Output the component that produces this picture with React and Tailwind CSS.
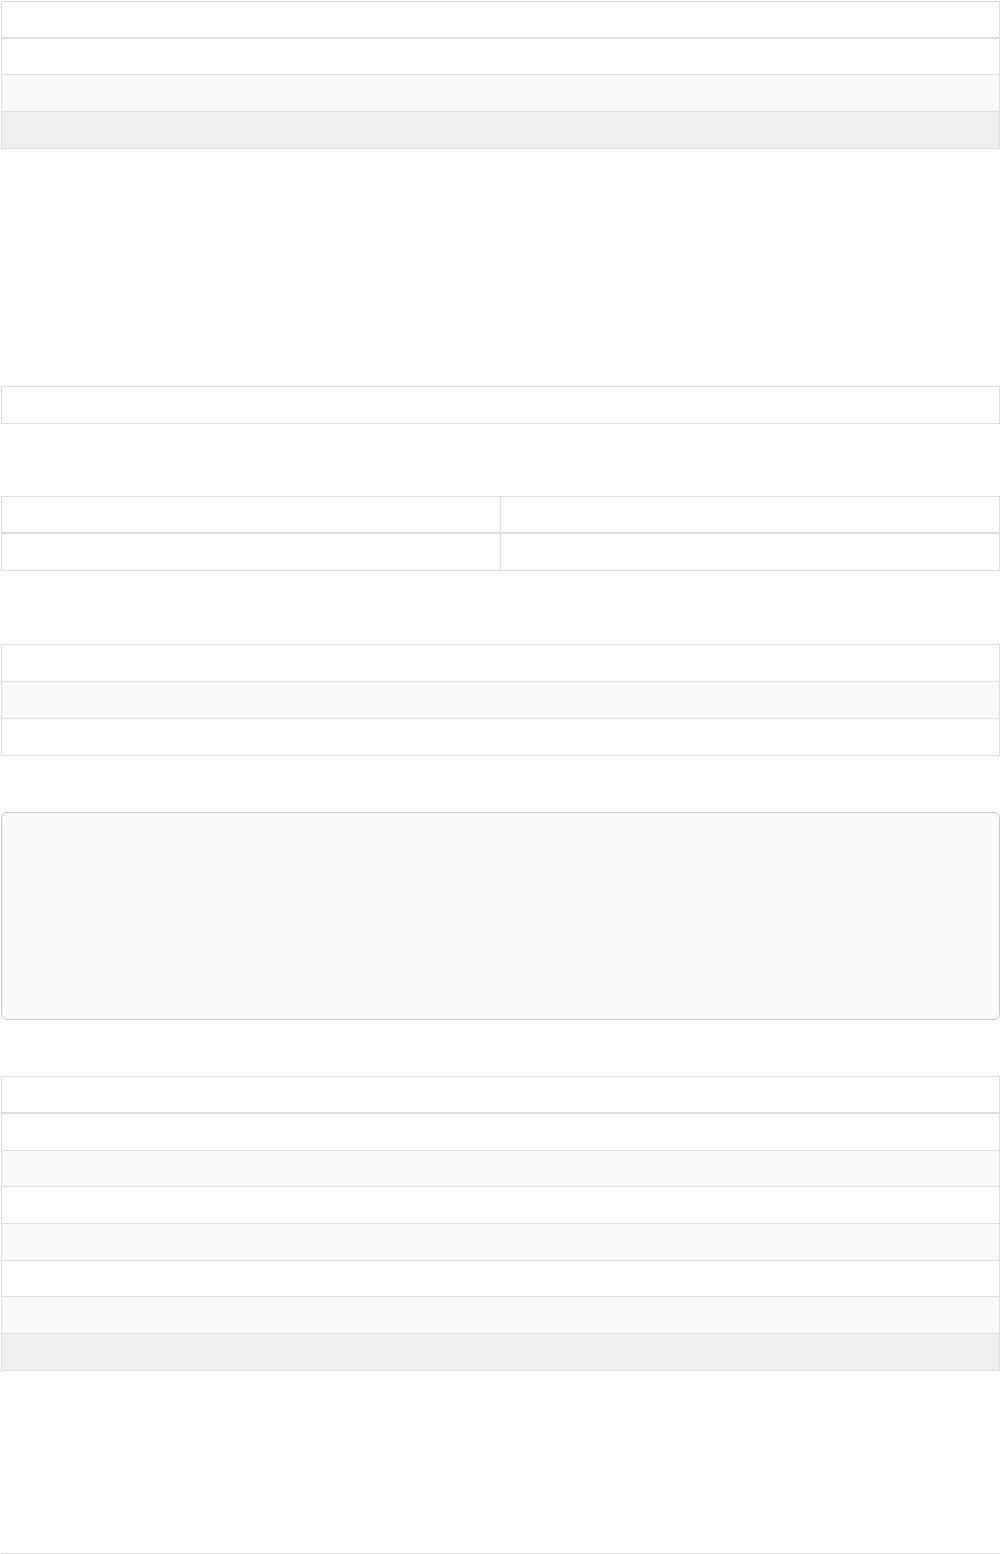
const BORDER = "border-[#dddddd]";

// each row: [height, background, bottom border]
function Grid({ head, rows, cols = 1, className = "" }) {
  const colClass = cols === 2 ? "grid grid-cols-[499px_1fr]" : "flex";

  return (
    <div className={`ml-[1px] w-[999px] border ${BORDER} ${className}`}>
      {head && (
        <div className={`h-[37px] border-b-2 ${BORDER} ${colClass}`}>
          {cols === 2 ? (
            <>
              <div className={`border-r ${BORDER}`} />
              <div />
            </>
          ) : (
            <div className="flex-1" />
          )}
        </div>
      )}
      {rows.map((row, i) => {
        const last = i === rows.length - 1;
        return (
          <div
            key={i}
            className={`${row.h} ${row.bg} ${last ? "" : `border-b ${BORDER}`} ${colClass}`}
          >
            {cols === 2 ? (
              <>
                <div className={`border-r ${BORDER}`} />
                <div />
              </>
            ) : (
              <div className="flex-1" />
            )}
          </div>
        );
      })}
    </div>
  );
}

const firstTable = [
  { h: "h-[36px]", bg: "bg-white" },
  { h: "h-[37px]", bg: "bg-[#f9f9f9]" },
  { h: "h-[36px]", bg: "bg-[#efefef]" },
];

const lastTable = [
  { h: "h-[37px]", bg: "bg-white" },
  { h: "h-[36px]", bg: "bg-[#f9f9f9]" },
  { h: "h-[37px]", bg: "bg-white" },
  { h: "h-[37px]", bg: "bg-[#f9f9f9]" },
  { h: "h-[36px]", bg: "bg-white" },
  { h: "h-[37px]", bg: "bg-[#f9f9f9]" },
  { h: "h-[36px]", bg: "bg-[#efefef]" },
];

export default function App() {
  return (
    <div className="min-h-[1554px] bg-white pt-[1px] font-['Liberation_Sans',sans-serif] text-sm text-[#333333]">
      <Grid head rows={firstTable} />

      <Grid className="mt-[237px]" rows={[{ h: "h-[36px]", bg: "bg-white" }]} />

      <Grid
        className="mt-[72px]"
        head
        cols={2}
        rows={[{ h: "h-[36px]", bg: "bg-white" }]}
      />

      <Grid
        className="mt-[73px]"
        rows={[
          { h: "h-[37px]", bg: "bg-white" },
          { h: "h-[37px]", bg: "bg-[#f9f9f9]" },
          { h: "h-[36px]", bg: "bg-white" },
        ]}
      />

      <div className="ml-[1px] mt-[56px] h-[208px] w-[999px] rounded-md border border-[#c8c8c8] bg-[#f9f9f9]" />

      <Grid className="mt-[56px]" head rows={lastTable} />

      <div className={`ml-[1px] mt-[182px] w-[999px] border-t ${BORDER}`} />
    </div>
  );
}
